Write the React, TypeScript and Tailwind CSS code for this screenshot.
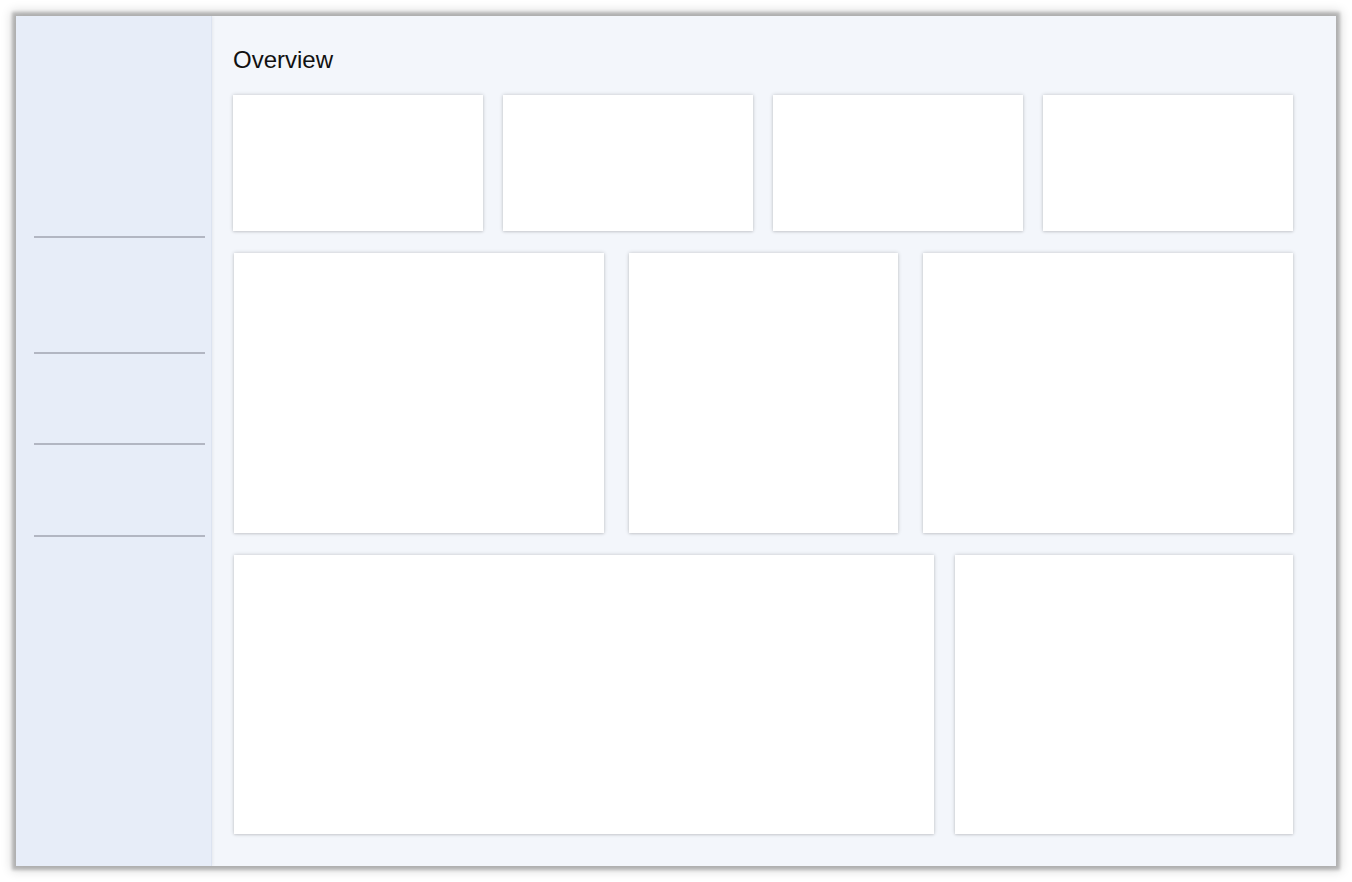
export default function App() {
  const navLines = ['mt-[220px]', 'mt-[114px]', 'mt-[89px]', 'mt-[90px]'];
  const card = 'bg-white shadow-[0_0_4px_rgba(0,0,0,0.2),0_1px_2px_rgba(0,0,0,0.08)]';

  return (
    <div className="w-[1352px] h-[882px] bg-white p-4" style={{ fontFamily: '"Liberation Sans", Arial, sans-serif' }}>
      <div className="flex h-full w-full overflow-hidden shadow-[0_0_3px_4px_rgba(0,0,0,0.22),0_0_10px_5px_rgba(0,0,0,0.14)]">
        {/* sidebar */}
        <aside className="relative z-10 flex w-[196px] shrink-0 flex-col border-r border-[#dce3f0] bg-[#e7edf8] pl-[18px] pr-[6px] shadow-[1px_0_3px_rgba(0,0,0,0.06)]">
          {navLines.map((m, i) => (
            <div key={i} className={`${m} h-[2px] w-full bg-[#b2b6c2]`}></div>
          ))}
        </aside>

        {/* main */}
        <main className="flex-1 bg-[#f3f6fb] pl-[21px] pr-[43px] pt-[32px]">
          <h1 className="text-[24px] leading-none font-normal text-[#111]">Overview</h1>

          <div className="mt-[23px] grid grid-cols-4 gap-5">
            {[0, 1, 2, 3].map((i) => (
              <div key={i} className={`h-[136px] ${card}`}></div>
            ))}
          </div>

          <div className="mt-[22px] ml-px flex gap-[25px]">
            <div className={`h-[280px] w-[370px] ${card}`}></div>
            <div className={`h-[280px] w-[269px] ${card}`}></div>
            <div className={`h-[280px] w-[370px] ${card}`}></div>
          </div>

          <div className="mt-[22px] ml-px flex gap-[21px]">
            <div className={`h-[279px] w-[700px] ${card}`}></div>
            <div className={`h-[279px] w-[338px] ${card}`}></div>
          </div>
        </main>
      </div>
    </div>
  );
}
